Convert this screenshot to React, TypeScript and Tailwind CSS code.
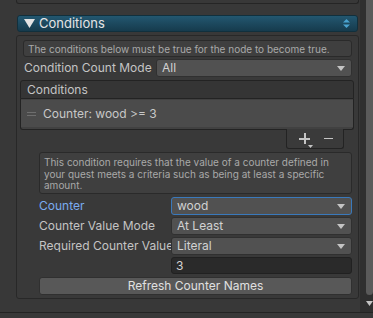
import React from "react";

const font = { fontFamily: "Inter, 'Noto Sans', sans-serif" };

function Arrow() {
  return (
    <svg width="8" height="5" viewBox="0 0 8 5" className="shrink-0">
      <path d="M0 0 H8 L4 5 Z" fill="#c4c4c4" />
    </svg>
  );
}

function Dropdown({ value, focused }: { value: string; focused?: boolean }) {
  return (
    <div
      className={`flex-1 h-[18px] flex items-center justify-between pl-[5px] pr-[6px] rounded-[3px] bg-[#515151] border ${
        focused ? "border-[#3a79bb]" : "border-[#303030]"
      } text-[12px] text-[#d2d2d2]`}
    >
      <span className="leading-none">{value}</span>
      <Arrow />
    </div>
  );
}

function Row({
  label,
  children,
  labelClass = "text-[#c4c4c4]",
  labelW,
}: {
  label: string;
  children: React.ReactNode;
  labelClass?: string;
  labelW: string;
}) {
  return (
    <div className="flex items-center h-[18px]">
      <div className={`${labelW} shrink-0 overflow-hidden whitespace-nowrap text-[12px] leading-none ${labelClass}`}>
        {label}
      </div>
      {children}
    </div>
  );
}

export default function App() {
  return (
    <div className="w-[373px] h-[318px] bg-[#383838] flex flex-col overflow-hidden" style={font}>
      <div className="flex flex-1 min-h-0">
        <div className="flex-1 flex flex-col pl-[16px] pr-[1px]">
          {/* top box remnant */}
          <div className="h-[4px] border-l border-r border-b border-[#252525] rounded-b-[3px]" />
          {/* foldout header */}
          <div className="mt-[11px] mx-[1px] h-[17px] rounded-[3px] border border-[#11303d] bg-gradient-to-b from-[#235770] to-[#163b4d] flex items-center pl-[6px] pr-[7px]">
            <svg width="11" height="9" viewBox="0 0 11 9" className="mr-[4px]">
              <path d="M0 0 H11 L5.5 9 Z" fill="#e4e4e4" />
            </svg>
            <span className="text-[13px] text-[#e4e4e4] leading-none">Conditions</span>
            <div className="flex-1" />
            <svg width="7" height="9" viewBox="0 0 7 9">
              <path d="M0 3.5 L3.5 0 L7 3.5 Z" fill="#4aa3cf" />
              <path d="M0 5.5 L3.5 9 L7 5.5 Z" fill="#4aa3cf" />
            </svg>
          </div>
          {/* panel */}
          <div className="mt-[3px] h-[264px] border border-[#282828] rounded-[3px] bg-[#393939] pt-[4px] px-[6px] flex flex-col">
            <div className="h-[17px] rounded-[3px] border border-[#2a2a2a] bg-[#3f3f3f] flex items-center pl-[4px] text-[10px] text-[#a9a9a9] leading-none whitespace-nowrap overflow-hidden">
              The conditions below must be true for the node to become true.
            </div>
            <div className="mt-[2px] pl-[1px]">
              <Row label="Condition Count Mode" labelW="w-[132px]">
                <Dropdown value="All" />
              </Row>
            </div>
            {/* list */}
            <div className="mt-[3px] -mx-[3px] mr-[-2px] flex flex-col">
              <div className="h-[19px] border border-[#232323] rounded-t-[3px] bg-[#353535] flex items-center pl-[6px] text-[12px] text-[#c4c4c4] leading-none">
                Conditions
              </div>
              <div className="h-[31px] border-l border-r border-b border-[#232323] rounded-b-[3px] bg-[#414141] pt-[1px]">
                <div className="h-[27px] bg-[#4b4b4b] flex items-center pl-[6px]">
                  <div className="flex flex-col gap-[2px] w-[9px] mr-[7px]">
                    <div className="h-[1px] bg-[#6e6e6e]" />
                    <div className="h-[1px] bg-[#6e6e6e]" />
                  </div>
                  <span className="text-[12px] text-[#c8c8c8] leading-none">Counter: wood &gt;= 3</span>
                </div>
              </div>
              <div className="flex justify-end pr-[10px]">
                <div className="w-[58px] h-[20px] -mt-[1px] border-l border-r border-b border-[#232323] rounded-b-[3px] bg-[#3a3a3a] flex items-center">
                  <div className="relative ml-[12px] w-[11px] h-[11px]">
                    <div className="absolute left-[5px] top-0 w-[1.5px] h-[11px] bg-[#c4c4c4]" />
                    <div className="absolute left-0 top-[5px] w-[11px] h-[1.5px] bg-[#c4c4c4]" />
                    <svg width="5" height="3" viewBox="0 0 5 3" className="absolute left-[9px] top-[12px]">
                      <path d="M0 0 H5 L2.5 3 Z" fill="#c4c4c4" />
                    </svg>
                  </div>
                  <div className="ml-[14px] w-[9px] h-[1.5px] bg-[#c4c4c4]" />
                </div>
              </div>
            </div>
            {/* element editor */}
            <div className="mt-[3px] pl-[16px] flex flex-col gap-[2px]">
              <div className="h-[42px] rounded-[3px] border border-[#2a2a2a] bg-[#3f3f3f] px-[4px] pt-[4px] text-[10px] leading-[11.5px] text-[#a9a9a9]">
                This condition requires that the value of a counter defined in your quest meets a criteria such as being at least a specific amount.
              </div>
              <div className="mt-[1px] flex flex-col gap-[2px]">
                <Row label="Counter" labelW="w-[132px]" labelClass="text-[#7aacf0]">
                  <Dropdown value="wood" focused />
                </Row>
                <Row label="Counter Value Mode" labelW="w-[132px]">
                  <Dropdown value="At Least" />
                </Row>
                <Row label="Required Counter Value" labelW="w-[132px]">
                  <Dropdown value="Literal" />
                </Row>
                <div className="flex h-[17px]">
                  <div className="w-[132px] shrink-0" />
                  <div className="flex-1 rounded-[3px] bg-[#2a2a2a] border border-[#212121] flex items-center pl-[4px] text-[12px] text-[#d2d2d2] leading-none">
                    3
                  </div>
                </div>
              </div>
              <div className="mt-[1px] h-[18px] rounded-[3px] bg-[#585858] border border-[#303030] flex items-center justify-center text-[12px] text-[#e0e0e0] leading-none">
                Refresh Counter Names
              </div>
            </div>
          </div>
        </div>
        {/* scrollbar */}
        <div className="w-[13px] bg-[#2f2f2f] flex flex-col items-end">
          <div className="w-[7px] h-[295px] bg-[#5a5a5a] rounded-b-[4px]" />
          <svg width="7" height="5" viewBox="0 0 7 5" className="mt-[6px] mr-[0px]">
            <path d="M0 0 H7 L3.5 5 Z" fill="#c4c4c4" />
          </svg>
        </div>
      </div>
      <div className="h-[6px] border-t border-[#232323] bg-[#383838]" />
    </div>
  );
}
